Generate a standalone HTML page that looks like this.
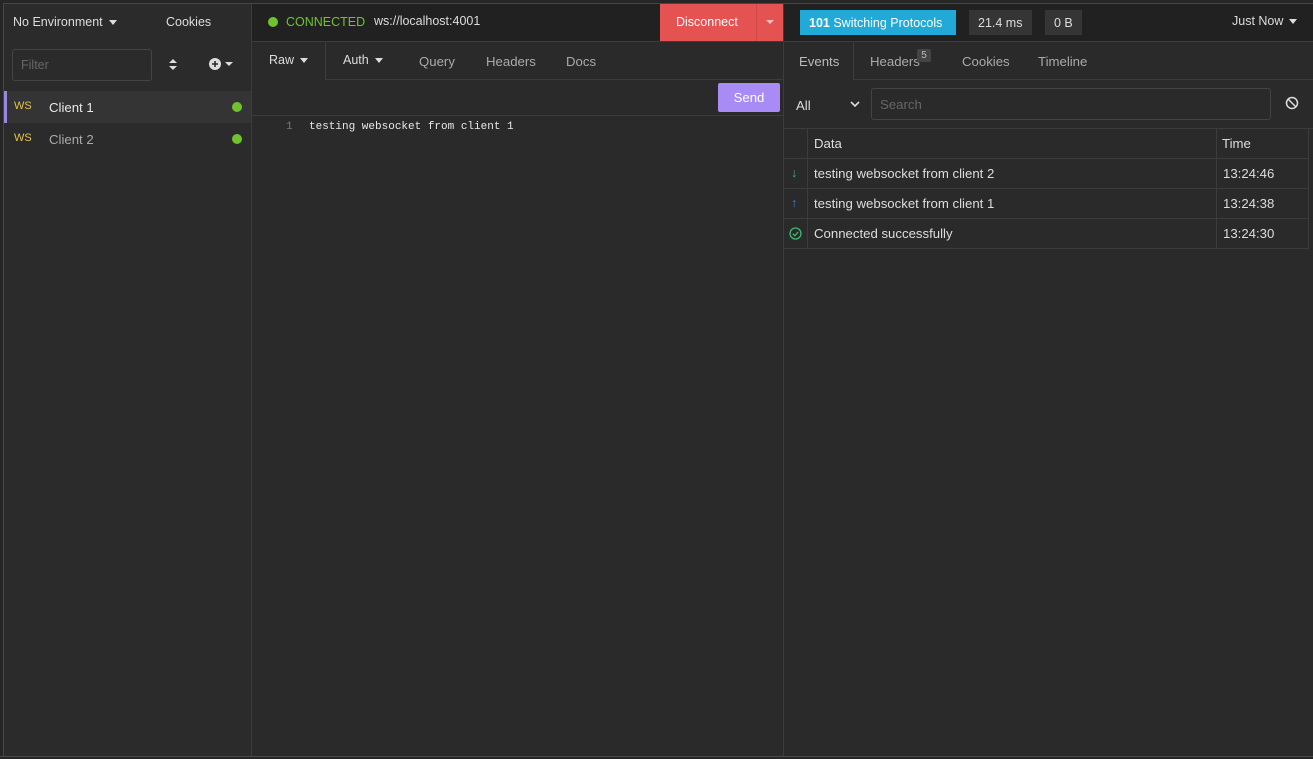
<!DOCTYPE html>
<html><head><meta charset="utf-8"><style>
*{box-sizing:border-box;margin:0;padding:0}
body{width:1313px;height:759px;background:#2a2a2a;font-family:"Liberation Sans",sans-serif;font-size:12.5px;color:#ddd;position:relative;overflow:hidden}
.a{position:absolute}
.line{position:absolute;background:#3c3c3c}
.tri{display:inline-block;width:0;height:0;border-left:4px solid transparent;border-right:4px solid transparent;border-top:5px solid #ddd;vertical-align:middle;margin-left:6px}
.mono{font-family:"Liberation Mono",monospace;font-size:11px}
.t{font-size:13.2px}
</style></head><body>
<div class="a" style="left:0;top:0;width:1313px;height:3px;background:#262626"></div>
<div class="line" style="left:0;top:3px;width:1313px;height:1px;background:#464646"></div>
<div class="a" style="left:0;top:0;width:3px;height:759px;background:#262626"></div>
<div class="line" style="left:3px;top:3px;width:1px;height:756px;background:#464646"></div>
<div class="line" style="left:0;top:756px;width:1313px;height:1px;background:#4a4a4a"></div>
<div class="a" style="left:0;top:757px;width:1313px;height:2px;background:#262626"></div>

<div class="a" style="left:4px;top:4px;width:247px;height:752px;background:#2b2b2b"></div>
<div class="line" style="left:251px;top:4px;width:1px;height:752px"></div>
<div class="a" style="left:13px;top:15px">No Environment<span class="tri"></span></div>
<div class="a" style="left:166px;top:15px">Cookies</div>
<div class="a" style="left:12px;top:49px;width:140px;height:32px;border:1px solid #444;border-radius:3px;color:#666;padding:8px 8px">Filter</div>
<svg class="a" style="left:168px;top:58px" width="10" height="14"><path d="M1 5 L5 1 L9 5Z M1 8 L5 12 L9 8Z" fill="#ddd"/></svg>
<svg class="a" style="left:208px;top:57px" width="26" height="14"><circle cx="7" cy="7" r="6" fill="#ddd"/><path d="M7 4v6M4 7h6" stroke="#2b2b2b" stroke-width="1.6"/><path d="M17 5h8l-4 4z" fill="#ddd"/></svg>
<div class="a" style="left:4px;top:91px;width:247px;height:32px;background:#343434"></div>
<div class="a" style="left:4px;top:91px;width:3px;height:32px;background:#9a86dc"></div>
<div class="a" style="left:14px;top:100px;color:#e4c34a;font-size:11px">WS</div>
<div class="a t" style="left:49px;top:100px;color:#e8e8e8">Client 1</div>
<div class="a" style="left:232px;top:102px;width:10px;height:10px;border-radius:50%;background:#6fc42e"></div>
<div class="a" style="left:14px;top:132px;color:#e4c34a;font-size:11px">WS</div>
<div class="a t" style="left:49px;top:132px;color:#aaa">Client 2</div>
<div class="a" style="left:232px;top:134px;width:10px;height:10px;border-radius:50%;background:#6fc42e"></div>

<div class="a" style="left:252px;top:4px;width:1061px;height:37px;background:#212121"></div>
<div class="line" style="left:252px;top:41px;width:1061px;height:1px"></div>
<div class="a" style="left:268px;top:17px;width:10px;height:10px;border-radius:50%;background:#6fc42e"></div>
<div class="a" style="left:286px;top:15px;color:#6fc42e">CONNECTED</div>
<div class="a" style="left:374px;top:14px;color:#ddd">ws://localhost:4001</div>
<div class="a" style="left:660px;top:4px;width:124px;height:37px;background:#e45252"></div>
<div class="a" style="left:676px;top:15px;color:#fff">Disconnect</div>
<div class="a" style="left:756px;top:4px;width:1px;height:37px;background:#cc4848"></div>
<div class="a" style="left:766px;top:20px;border-left:4px solid transparent;border-right:4px solid transparent;border-top:4px solid #f5c0c0"></div>
<div class="line" style="left:783px;top:4px;width:1px;height:752px"></div>
<div class="a" style="left:800px;top:10px;width:156px;height:25px;background:#21a9d8;color:#fff;padding:6px 9px"><b>101</b> Switching Protocols</div>
<div class="a" style="left:969px;top:10px;width:63px;height:25px;background:#353535;padding:6px 9px">21.4 ms</div>
<div class="a" style="left:1045px;top:10px;width:37px;height:25px;background:#353535;padding:6px 9px">0 B</div>
<div class="a" style="left:1232px;top:14px">Just Now<span class="tri"></span></div>

<div class="line" style="left:325px;top:42px;width:1px;height:38px"></div>
<div class="line" style="left:325px;top:79px;width:458px;height:1px"></div>
<div class="a" style="left:269px;top:53px">Raw<span class="tri"></span></div>
<div class="a" style="left:343px;top:53px">Auth<span class="tri"></span></div>
<div class="a t" style="left:419px;top:54px;color:#aaa">Query</div>
<div class="a t" style="left:486px;top:54px;color:#aaa">Headers</div>
<div class="a t" style="left:566px;top:54px;color:#aaa">Docs</div>
<div class="a t" style="left:718px;top:83px;width:62px;height:29px;background:#a88bf5;border-radius:2px;color:#fff;padding:7px 0;text-align:center">Send</div>
<div class="line" style="left:252px;top:115px;width:531px;height:1px"></div>
<div class="a mono" style="left:286px;top:121px;color:#777">1</div>
<div class="a mono" style="left:309px;top:121px;color:#e8e8e8">testing websocket from client 1</div>

<div class="line" style="left:853px;top:42px;width:1px;height:38px"></div>
<div class="line" style="left:853px;top:79px;width:460px;height:1px"></div>
<div class="a t" style="left:799px;top:54px;color:#bbb">Events</div>
<div class="a t" style="left:870px;top:54px;color:#aaa">Headers</div>
<div class="a" style="left:917px;top:49px;width:14px;height:13px;background:#444;color:#bbb;font-size:10px;text-align:center;line-height:13px;border-radius:2px">5</div>
<div class="a t" style="left:962px;top:54px;color:#aaa">Cookies</div>
<div class="a t" style="left:1038px;top:54px;color:#aaa">Timeline</div>
<div class="a t" style="left:796px;top:98px">All</div>
<svg class="a" style="left:849px;top:100px" width="12" height="8"><path d="M2 2l4 4 4-4" stroke="#ddd" stroke-width="1.6" fill="none"/></svg>
<div class="a t" style="left:871px;top:88px;width:400px;height:32px;border:1px solid #444;border-radius:3px;color:#666;padding:8px 8px">Search</div>
<svg class="a" style="left:1285px;top:96px" width="14" height="14"><circle cx="7" cy="7" r="5.5" stroke="#ddd" stroke-width="1.5" fill="none"/><path d="M3 3l8 8" stroke="#ddd" stroke-width="1.5"/></svg>
<div class="line" style="left:784px;top:128px;width:529px;height:1px"></div>
<div class="line" style="left:784px;top:158px;width:525px;height:1px"></div>
<div class="line" style="left:784px;top:188px;width:525px;height:1px"></div>
<div class="line" style="left:784px;top:218px;width:525px;height:1px"></div>
<div class="line" style="left:784px;top:248px;width:525px;height:1px"></div>
<div class="line" style="left:807px;top:128px;width:1px;height:120px"></div>
<div class="line" style="left:1216px;top:128px;width:1px;height:120px"></div>
<div class="line" style="left:1308px;top:128px;width:1px;height:120px"></div>
<div class="a t" style="left:814px;top:136px">Data</div>
<div class="a t" style="left:1222px;top:136px">Time</div>
<div class="a" style="left:791px;top:166px;color:#3fb871">↓</div>
<div class="a t" style="left:814px;top:166px">testing websocket from client 2</div>
<div class="a t" style="left:1223px;top:166px">13:24:46</div>
<div class="a" style="left:791px;top:196px;color:#3b7fd6">↑</div>
<div class="a t" style="left:814px;top:196px">testing websocket from client 1</div>
<div class="a t" style="left:1223px;top:196px">13:24:38</div>
<svg class="a" style="left:789px;top:227px" width="13" height="13"><circle cx="6.5" cy="6.5" r="5.5" stroke="#3fb871" stroke-width="1.3" fill="none"/><path d="M3.8 6.7l2 2 3.4-3.6" stroke="#3fb871" stroke-width="1.3" fill="none"/></svg>
<div class="a t" style="left:814px;top:226px">Connected successfully</div>
<div class="a t" style="left:1223px;top:226px">13:24:30</div>
</body></html>
